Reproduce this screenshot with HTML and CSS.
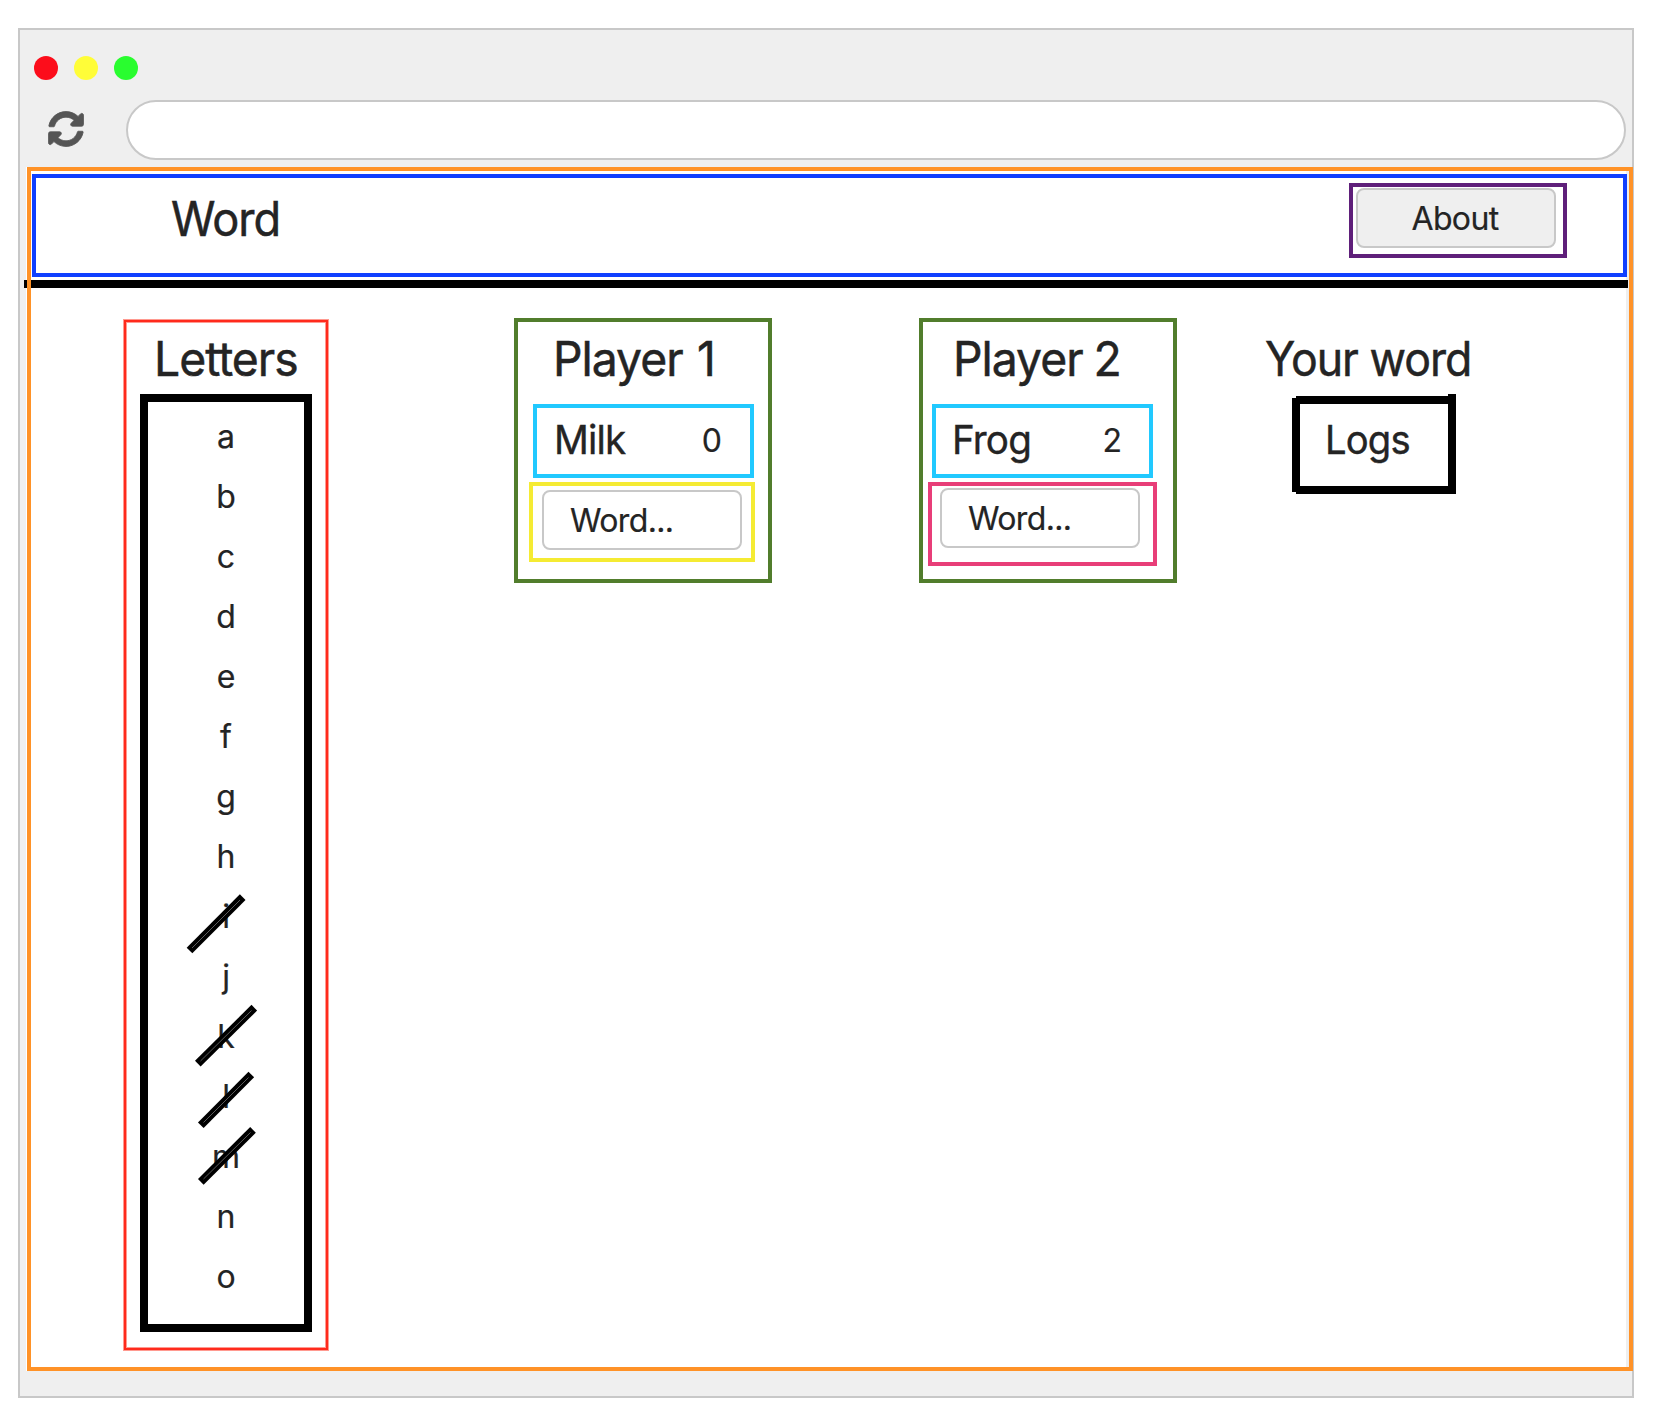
FILE: index.html
```html
<!DOCTYPE html>
<html lang="en">
<head>
<meta charset="utf-8">
<title>Word</title>
<link rel="stylesheet" href="styles.css">
</head>
<body>
<div class="browser">
  <div class="titlebar"><i class="dot red"></i><i class="dot yellow"></i><i class="dot green"></i></div>
  <div class="toolbar">
    <svg class="reload" width="36" height="36" viewBox="0 0 512 512"><path fill="#555" stroke="#555" stroke-width="12" d="M370.72 133.28C339.458 104.008 298.888 87.962 255.848 88c-77.458.068-144.328 53.178-162.791 126.85-1.344 5.363-6.122 9.15-11.651 9.15H24.103c-7.498 0-13.194-6.807-11.807-14.176C33.933 94.924 134.813 8 256 8c66.448 0 126.791 26.136 171.315 68.685L463.03 40.97C478.149 25.851 504 36.559 504 57.941V192c0 13.255-10.745 24-24 24H345.941c-21.382 0-32.09-25.851-16.971-40.971l41.75-41.749zM32 296h134.059c21.382 0 32.09 25.851 16.971 40.971l-41.75 41.75c31.262 29.273 71.835 45.319 114.876 45.28 77.418-.07 144.315-53.144 162.787-126.849 1.344-5.363 6.122-9.15 11.651-9.15h57.304c7.498 0 13.194 6.807 11.807 14.176C478.067 417.076 377.187 504 256 504c-66.448 0-126.791-26.136-171.315-68.685L48.97 471.03C33.851 486.149 8 475.441 8 454.059V320c0-13.255 10.745-24 24-24z"/></svg>
    <div class="address"></div>
  </div>
  <div class="page">
    <header class="header">
      <h1 class="title brand">Word</h1>
      <div class="about-frame"><button class="field about"><span>About</span></button></div>
    </header>
    <div class="divider"></div>
    <main class="board">
      <section class="letters">
        <h2 class="title">Letters</h2>
        <ul class="letter-list">
          <li>a</li><li>b</li><li>c</li><li>d</li><li>e</li><li>f</li><li>g</li><li>h</li>
          <li>i</li><li>j</li><li>k</li><li>l</li><li>m</li><li>n</li><li>o</li>
        </ul>
        <svg class="strikes" width="80" height="300" viewBox="180 890 80 300">
          <g stroke="#000" stroke-width="8">
            <path d="M189.5 950.5L242.7 897.2"/><path d="M197.8 1063.7L254.3 1007.7"/><path d="M200.8 1125.2L251.3 1074.5"/><path d="M200.8 1181.8L253 1129.8"/>
          </g>
          <g stroke="#999" stroke-width=".6">
            <path d="M192 948L240 900"/><path d="M200.5 1061L251.5 1010.5"/><path d="M203.5 1122.5L248.5 1077.5"/><path d="M203.5 1179L250.5 1132.5"/>
          </g>
        </svg>
      </section>
      <section class="player one">
        <h2 class="title">Player 1</h2>
        <div class="score"><span class="name">Milk</span><span class="points">0</span></div>
        <div class="entry"><div class="field"><span>Word...</span></div></div>
      </section>
      <section class="player two">
        <h2 class="title">Player 2</h2>
        <div class="score"><span class="name">Frog</span><span class="points">2</span></div>
        <div class="entry"><div class="field"><span>Word...</span></div></div>
      </section>
      <section class="yours">
        <h2 class="title">Your word</h2>
        <div class="logs">
          <svg class="logs-box" width="164" height="100" viewBox="0 0 164 100"><path d="M0 4h8v94H0zM4 2h160v8H4zM156 0h8v100h-8zM4 92h160v8H4z"/></svg>
          <span class="name">Logs</span>
        </div>
      </section>
    </main>
  </div>
</div>
</body>
</html>
```
FILE: styles.css
```css
* { box-sizing: border-box; }
body { margin: 0; background: #fff; color: #242424; font-family: Inter, sans-serif; display: flow-root; -webkit-text-stroke: .2px #242424; }
h1, h2, ul { margin: 0; padding: 0; font-weight: 400; list-style: none; }
svg { display: block; }

.browser { width: 1616px; height: 1370px; margin: 28px 0 0 18px; border: 2px solid #c8c8c8; background: #efefef; }
.titlebar { display: flex; gap: 16px; height: 70px; padding: 26px 0 0 14px; }
.dot { width: 24px; height: 24px; border-radius: 50%; }
.red { background: #fc0d1b; }
.yellow { background: #fffd38; }
.green { background: #29fd2f; }
.toolbar { display: flex; height: 60px; padding-left: 28px; }
.reload { margin-top: 11px; }
.address { width: 1500px; height: 60px; margin-left: 42px; flex: none; border: 2px solid #c8c8c8; border-radius: 30px; background: #fff; }

.page { display: flow-root; width: 1606px; height: 1204px; margin: 7px 0 0 7px; border: 4px solid #ff9227; background: linear-gradient(to right, #fff 1595px, #efefef 0) padding-box; box-shadow: -1px 0 0 #fff; }
.header { display: flex; justify-content: space-between; width: 1595px; height: 103px; margin: 3px 0 0 1px; padding: 0 56px 0 0; border: 4px solid #0f3fff; }

.title { margin-left: 14px; font-size: 48px; line-height: 59px; letter-spacing: -1.06px; white-space: nowrap; transform: scaleX(.965); transform-origin: 0 0; -webkit-text-stroke-width: .5px; }
.brand { margin: 11px 0 0 135px; transform: scaleX(.94); }
.about-frame { width: 218px; height: 75px; margin-top: 5px; padding: 1px 0 0 3px; border: 4px solid #5f1f7a; }
.field { display: block; width: 200px; height: 60px; padding: 9px 0 0 26px; border: 2px solid #c8c8c8; border-radius: 8px; background: #fff; font-size: 32px; line-height: 39px; letter-spacing: -0.02em; }
.field span { display: block; }
.about { display: flex; justify-content: center; align-items: flex-start; padding: 9px 2px 0 0; background: #efefef; color: inherit; font-family: inherit; }

.divider { position: relative; width: 1597px; height: 8px; margin-top: 3px; background: #000; }
.divider::before { content: ""; position: absolute; left: -7px; width: 3px; height: 8px; background: #000; }

.board { display: flex; align-items: flex-start; }
.letters { position: relative; width: 204px; height: 1030px; margin: 32px 0 0 93px; padding: 7px 0 0 14px; border: 2px solid #ff2a1c; box-shadow: 0 0 0 1px #ff9a90, inset 0 0 0 1px #ff9a90; }
.letter-list { width: 172px; height: 938px; margin-top: 6px; padding-top: 4px; border: 8px solid #000; font-size: 32px; line-height: 39px; text-align: center; }
.letter-list li { height: 60px; padding-top: 11px; }
.strikes { position: absolute; left: 54px; top: 568px; }

.player { width: 258px; height: 265px; margin-top: 30px; padding-top: 7px; border: 4px solid #517d2c; }
.one { margin-left: 186px; }
.two { margin-left: 147px; }
.one .title { margin-left: 35px; word-spacing: 2.6px; }
.two .title { margin-left: 30px; word-spacing: -1.2px; }
.score { display: flex; justify-content: space-between; width: 221px; height: 74px; margin: 16px 0 0 15px; padding: 7px 28px 0 17px; border: 4px solid #21c9ff; }
.two .score { margin-left: 9px; padding: 7px 27px 0 16px; }
.name { font-size: 40px; line-height: 49px; letter-spacing: -.88px; white-space: nowrap; transform: scaleX(.965); transform-origin: 0 0; -webkit-text-stroke-width: .4px; }
.points { margin-top: 6px; font-size: 32px; line-height: 39px; }
.entry { width: 226px; height: 80px; margin: 4px 0 0 11px; padding: 4px 0 0 9px; border: 4px solid #f5eb33; }
.two .entry { width: 229px; height: 84px; margin-left: 5px; padding: 2px 0 0 8px; border-color: #e83e78; }

.yours { margin: 41px 0 0 88px; }
.yours .title { margin-left: 0; transform: scaleX(.93); }
.logs { position: relative; width: 164px; height: 100px; margin: 6px 0 0 27px; padding: 21px 0 0 33px; }
.logs-box { position: absolute; left: 0; top: 0; }
.logs .name { display: block; transform: scaleX(.955); }
```
